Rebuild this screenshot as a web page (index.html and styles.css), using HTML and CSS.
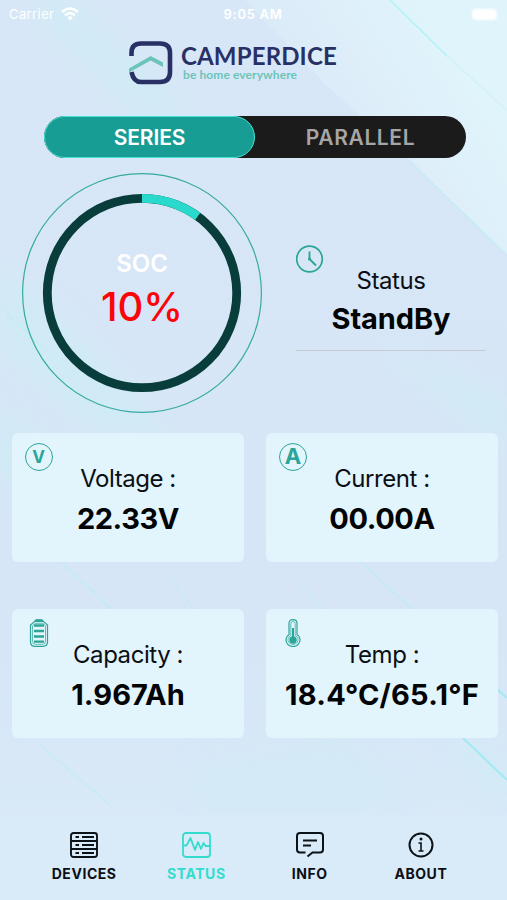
FILE: index.html
```html
<!DOCTYPE html>
<html lang="en">
<head>
  <meta charset="UTF-8" />
  <meta name="viewport" content="width=device-width, initial-scale=1.0"/>
  <title>Camperdice Battery</title>
  <link rel="stylesheet" href="styles.css">
</head>
<body>
  <svg class="backdrop" viewBox="0 0 507 900" aria-hidden="true">
    <defs>
      <linearGradient id="corner" gradientUnits="userSpaceOnUse" x1="290" y1="150" x2="450" y2="50">
        <stop offset="0" stop-color="#d8e9f7"/>
        <stop offset=".6" stop-color="#deeffa"/>
        <stop offset="1" stop-color="#e0f4fb"/>
      </linearGradient>
      <filter id="soft" x="-30%" y="-30%" width="160%" height="160%"><feGaussianBlur stdDeviation="12"/></filter>
    </defs>
    <path d="M245 0H507V255L410 160L325 84Z" fill="url(#corner)"/>
    <g filter="url(#soft)" fill="#c9eff5" opacity=".5">
      <path d="M25 0H75L190 115H135Z"/>
      <path d="M0 260L110 370L170 440L90 430L0 350Z"/>
      <path d="M0 400L60 450L0 500Z"/>
      <path d="M380 345L507 400V450Z"/>
      <path d="M440 735L507 765V810Z"/>
      <path d="M180 770L340 735L410 790L360 815H200Z" opacity=".6"/>
    </g>
    <g fill="none" stroke="#b5f0f3" stroke-width="1.3">
      <path d="M390 0L447 56" stroke="#a9f4f4"/>
      <path d="M447 56L507 110" opacity=".4"/>
      <path d="M410 162L507 255" opacity=".6"/>
      <path d="M361 562L413 610M62 562L112 610" opacity=".7"/>
      <path d="M498 690L507 698M463 738L507 780" stroke="#9feaf3" stroke-width="2"/>
      <path d="M0 307L45 350M300 585L325 610M40 745L110 805M170 580L195 610" opacity=".5"/>
    </g>
  </svg>

  <div class="app">
    <div class="status-bar">
      <div class="carrier">Carrier
        <svg width="18" height="14" viewBox="0 0 18 14" fill="none" stroke="#fff" stroke-width="2.6">
          <path d="M1 5Q9-2 17 5M4 8.300Q9 4 14 8.300"/>
          <path d="M6.200 10.500Q9 8 11.800 10.500L9 13.400Z" fill="#fff" stroke="none"/>
        </svg>
      </div>
      <div class="clock">9:05 AM</div>
      <div class="battery"><span></span></div>
    </div>

    <header class="brand">
      <svg width="44" height="44" viewBox="0 0 44 44" fill="none">
        <path d="M2.500 15V12Q2.500 2.500 12 2.500H31Q41 2.500 41 12V31Q41 41 31 41H12Q4.500 41 2.500 31" stroke="#283065" stroke-width="4.600"/>
        <path d="M0 27.500L21.700 15L34 21.500V26L21.700 19.500L0 31.500Z" fill="#6cc4b9"/>
      </svg>
      <div class="brand-text">
        <div class="brand-name">CAMPERDICE</div>
        <div class="tagline">be home everywhere</div>
      </div>
    </header>

    <div class="switch">
      <div class="option active">SERIES</div>
      <div class="option">PARALLEL</div>
    </div>

    <section class="overview">
      <div class="gauge">
        <svg class="gauge-ring" viewBox="0 0 240 240" fill="none">
          <circle cx="120" cy="120" r="119.400" stroke="#36aaa0" stroke-width="1.200"/>
          <circle cx="120" cy="120" r="94.700" stroke="#083d3c" stroke-width="8.800"/>
          <path d="M120 25.300A94.700 94.700 0 0 1 175.700 43.400" stroke="#28d9cc" stroke-width="8.800"/>
        </svg>
        <div class="soc-label">SOC</div>
        <div class="soc-value">10%</div>
      </div>
      <div class="state">
        <svg class="icon" viewBox="0 0 28 28" fill="none" stroke="#2aa598" stroke-width="1.700">
          <circle cx="13.500" cy="14" r="12.800"/>
          <path d="M13.500 6.500V14L20 20.500" stroke-width="1.900"/>
          <circle cx="13.500" cy="14" r="1.500" fill="#2aa598" stroke="none"/>
        </svg>
        <div class="label">Status</div>
        <div class="value standby">StandBy</div>
      </div>
    </section>

    <section class="cards">
      <div class="card">
        <div class="icon letter small">V</div>
        <div class="label">Voltage :</div>
        <div class="value">22.33V</div>
      </div>
      <div class="card">
        <div class="icon letter">A</div>
        <div class="label">Current :</div>
        <div class="value">00.00A</div>
      </div>
      <div class="card">
        <svg class="icon" viewBox="0 0 28 28" fill="none" stroke="#2aa598">
          <path d="M10 2.800V2Q10 .700 11.300 .700H16.700Q18 .700 18 2V2.800" fill="#2aa598"/>
          <path d="M9.500 2.500H18.500L22.500 6V23Q22.500 27.300 18 27.300H10Q5.500 27.300 5.500 23V6Z" stroke-width="1.200"/>
          <path d="M10 4.300H18L20.500 7V22.500Q20.500 25.300 17.500 25.300H10.500Q7.500 25.300 7.500 22.500V7Z" stroke-width=".7"/>
          <path d="M9 6.500H19M9 12H19M9 17.500H19M9 22.700H19" stroke-width="2.300"/>
        </svg>
        <div class="label">Capacity :</div>
        <div class="value capacity">1.967Ah</div>
      </div>
      <div class="card">
        <svg class="icon" viewBox="0 0 28 28" fill="none" stroke="#2aa598">
          <path d="M10 15.500V4.500Q10 .700 14 .700Q18 .700 18 4.500V15.500A7 6.600 0 1 1 10 15.500Z" stroke-width="1.200"/>
          <path d="M11.800 16.500V4.800Q11.800 2.500 14 2.500Q16.200 2.500 16.200 4.800V16.500A5 4.700 0 1 1 11.800 16.500Z" stroke-width=".7"/>
          <path d="M14 9V20" stroke-width="2"/>
          <circle cx="14" cy="21" r="3.700" fill="#2aa598" stroke="none"/>
        </svg>
        <div class="label">Temp :</div>
        <div class="value temp">18.4°C/65.1°F</div>
      </div>
    </section>

    <nav class="tabs">
      <div class="tab">
        <svg width="28" height="26" viewBox="0 0 28 26" fill="none" stroke="#0b1319" stroke-width="1.900">
          <rect x="1" y="1" width="26" height="24" rx="2.500"/>
          <path d="M1 9H27M1 17H27"/>
          <path d="M5.500 5H9M5.500 13H9M5.500 21H9M12 5H24M12 13H24M12 21H24" stroke-width="2"/>
        </svg>
        DEVICES
      </div>
      <div class="tab current">
        <svg width="29" height="26" viewBox="0 0 29 26" fill="none" stroke="#34dccd" stroke-width="1.800" stroke-linejoin="round">
          <rect x="1" y="1" width="27" height="24" rx="3"/>
          <path d="M1 13.500H4.500L8.500 6L13 18L16 10L19 17L21.500 11L23.500 14H28"/>
        </svg>
        STATUS
      </div>
      <div class="tab info">
        <svg width="28" height="26" viewBox="0 0 28 26" fill="none" stroke="#0b1319" stroke-width="2">
          <path d="M9.500 20.500H4Q1 20.500 1 17.500V4Q1 1 4 1H24Q27 1 27 4V17.500Q27 20.500 24 20.500H16.500L11.500 24.500"/>
          <path d="M7 8.500H21M7 13.500H15"/>
        </svg>
        INFO
      </div>
      <div class="tab">
        <svg width="26" height="26" viewBox="0 0 26 26" fill="none" stroke="#0b1319" stroke-width="2">
          <circle cx="13" cy="13" r="11.500"/>
          <path d="M10.500 11H13V19M10.500 19H15.500" stroke-width="1.600"/>
          <circle cx="13" cy="7" r="1.500" fill="#0b1319" stroke="none"/>
        </svg>
        ABOUT
      </div>
    </nav>
  </div>
</body>
</html>
```
FILE: styles.css
```css
* {
  box-sizing: border-box;
}

body {
  margin: 0;
  width: 507px;
  height: 900px;
  position: relative;
  overflow: hidden;
  font-family: Inter, "Liberation Sans", sans-serif;
  background: linear-gradient(to bottom, #d8e7f7, #d6e6f6 70%, #d9eaf9);
  color: #0b0f14;
  white-space: nowrap;
}

.backdrop {
  position: absolute;
  top: 0;
  left: 0;
  width: 507px;
  height: 900px;
}

.app {
  position: relative;
  height: 900px;
  display: flex;
  flex-direction: column;
}

.status-bar {
  height: 28px;
  padding: 0 10px 0 9px;
  display: grid;
  grid-template-columns: 1fr auto 1fr;
  align-items: center;
  color: #fff;
  font-size: 13px;
  line-height: 28px;
}

.carrier {
  display: flex;
  align-items: center;
  gap: 7px;
  letter-spacing: 0.4px;
}

.clock {
  font-weight: 600;
  letter-spacing: 0.7px;
}

.battery {
  display: flex;
  justify-content: flex-end;
}

.battery span {
  width: 25px;
  height: 11px;
  border-radius: 4px;
  background: #fff;
  filter: blur(1px);
}

.brand {
  height: 88px;
  padding: 13px 0 0 129px;
  display: flex;
  gap: 8px;
}

.brand-name {
  padding-top: 2px;
  font: 700 24px/25px Lato, sans-serif;
  letter-spacing: 0.15px;
  color: #283065;
}

.tagline {
  padding: 0 0 0 2px;
  font: 700 12px/14px Lato, sans-serif;
  letter-spacing: 0.1px;
  color: #6cc4b9;
}

.switch {
  width: 422px;
  height: 42px;
  margin-left: 44px;
  display: grid;
  grid-template-columns: 1fr 1fr;
  grid-template-rows: 42px;
  border-radius: 21px;
  background: #1b1b1b;
}

.option {
  border-radius: 21px;
  text-align: center;
  font-size: 21px;
  font-weight: 600;
  line-height: 44px;
  letter-spacing: 0.6px;
  color: #a5a5a5;
}

.option.active {
  border: 1px solid #43e4d6;
  background: #189d94;
  line-height: 42px;
  letter-spacing: -0.1px;
  color: #fff;
}

.overview {
  height: 275px;
  padding: 15px 21px 0 22px;
  display: flex;
  justify-content: space-between;
}

.gauge {
  width: 240px;
  height: 240px;
  display: grid;
  grid-template-rows: 34px 50px;
  align-content: start;
  padding-top: 74px;
  text-align: center;
  position: relative;
}

.gauge-ring {
  position: absolute;
  inset: 0;
}

.soc-label {
  font-size: 24px;
  font-weight: 600;
  line-height: 34px;
  color: #fff;
}

.soc-value {
  font-size: 40px;
  font-weight: 500;
  line-height: 52px;
  color: #fb0509;
}

.state {
  width: 190px;
  height: 106px;
  margin-top: 72px;
  position: relative;
  padding-top: 21px;
  border-bottom: 1px solid #c8ccce;
  text-align: center;
}

.icon {
  position: absolute;
  top: 10px;
  left: 13px;
  width: 28px;
  height: 28px;
}

.state .icon {
  top: 0;
  left: 0;
}

.label {
  font-size: 24px;
  line-height: 30px;
  letter-spacing: -0.45px;
}

.value {
  margin-top: 6px;
  font-size: 29px;
  font-weight: 700;
  line-height: 38px;
  letter-spacing: -0.4px;
  color: #020406;
}

.value.standby {
  margin-top: 4px;
  letter-spacing: -0.1px;
}

.value.capacity {
  letter-spacing: 0.1px;
}

.value.temp {
  letter-spacing: 0.2px;
}

.cards {
  padding: 0 9px 0 12px;
  display: grid;
  grid-template-columns: 232px 232px;
  grid-auto-rows: 129px;
  gap: 47px 22px;
}

.card {
  position: relative;
  padding-top: 31px;
  border-radius: 6px;
  background: #e2f4fc;
  text-align: center;
}

.letter {
  border: 1.5px solid #2aa598;
  border-radius: 50%;
  font-size: 22px;
  font-weight: 700;
  line-height: 25px;
  color: #2aa598;
}

.letter.small {
  padding-right: 1px;
  font-size: 17px;
  line-height: 27px;
}

.tabs {
  margin-top: auto;
  height: 85px;
  padding: 17px 30px 0 28px;
  display: grid;
  grid-template-columns: repeat(4, 1fr);
  background: #d9eaf9;
}

.tab {
  display: flex;
  flex-direction: column;
  align-items: center;
  gap: 6px;
  font-size: 14px;
  font-weight: 700;
  line-height: 20px;
  letter-spacing: 0.55px;
}

.tab.current {
  color: #34dccd;
}

.tab.info {
  padding-left: 2px;
}
```
